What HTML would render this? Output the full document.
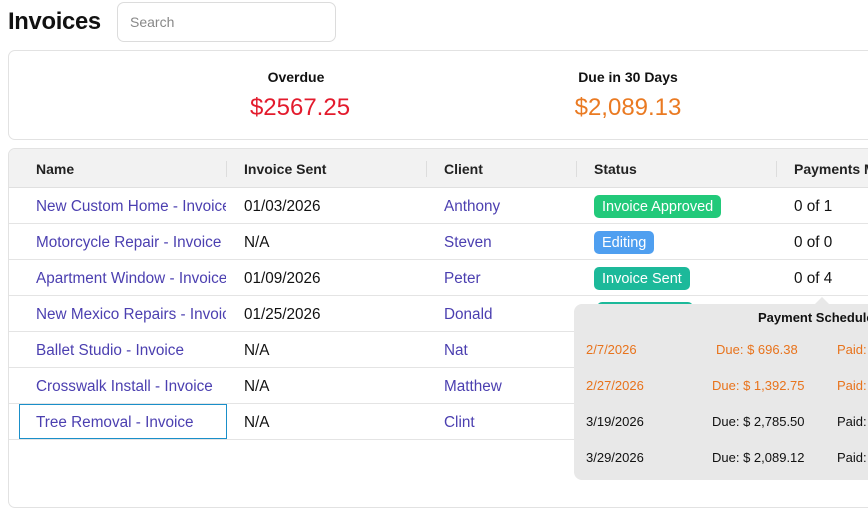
<!DOCTYPE html>
<html><head><meta charset="utf-8"><style>
*{box-sizing:border-box;margin:0;padding:0}
body{width:868px;height:488px;overflow:hidden;background:#fff;font-family:"Liberation Sans",Arial,sans-serif;color:#111;position:relative}
.a{position:absolute;white-space:nowrap}
h1{position:absolute;left:8px;top:8px;font-size:23.8px;font-weight:700;letter-spacing:-0.3px}
.search{left:117px;top:2px;width:219px;height:40px;border:1px solid #dcdcdc;border-radius:7px;color:#888;font-size:14px;padding:11px 0 0 12px}
.card{left:8px;top:50px;width:880px;height:90px;border:1px solid #e2e2e2;border-radius:7px}
.lbl{font-size:14px;font-weight:700;transform:translateX(-50%)}
.val{font-size:24px;transform:translateX(-50%)}
.tbl{left:8px;top:148px;width:880px;height:360px;border:1px solid #e2e2e2;border-radius:7px;overflow:hidden}
.hdr{position:absolute;left:0;top:0;width:100%;height:39px;background:#f2f2f2;border-bottom:1px solid #e0e0e0}
.sep{position:absolute;top:12px;width:1px;height:16px;background:#ddd}
.row{position:absolute;left:0;width:100%;height:36px;border-bottom:1px solid #e4e4e4}
.t{font-size:15.3px}
.h{font-size:14px;font-weight:700;color:#222;top:161px}
.lnk{color:#4b3fb0;width:190px;overflow:hidden}
.badge{font-size:14.5px;color:#fff;border-radius:5px;padding:4px 8px 0;height:23px}
.tip{left:574px;top:304px;width:320px;height:176px;background:#e8e8e8;border-radius:8px}
.ar{left:815px;top:297px;width:0;height:0;border-left:7px solid transparent;border-right:7px solid transparent;border-bottom:7px solid #e8e8e8}
.s{font-size:13px}
.o{color:#e8731c}
</style></head><body>
<h1>Invoices</h1>
<div class="a search">Search</div>
<div class="a card"></div>
<div class="a lbl" style="left:296px;top:69px">Overdue</div>
<div class="a val" style="left:300px;top:94px;color:#e31b2d">$2567.25</div>
<div class="a lbl" style="left:628px;top:69px">Due in 30 Days</div>
<div class="a val" style="left:628px;top:94px;color:#ea7a22">$2,089.13</div>
<div class="a tbl">
<div class="hdr"><div class="sep" style="left:217px"></div><div class="sep" style="left:417px"></div><div class="sep" style="left:567px"></div><div class="sep" style="left:767px"></div></div>
<div class="row" style="top:39px"></div><div class="row" style="top:75px"></div><div class="row" style="top:111px"></div><div class="row" style="top:147px"></div><div class="row" style="top:183px"></div><div class="row" style="top:219px"></div><div class="row" style="top:255px"></div>
</div>
<div class="a h" style="left:36px">Name</div>
<div class="a h" style="left:244px">Invoice Sent</div>
<div class="a h" style="left:444px">Client</div>
<div class="a h" style="left:594px">Status</div>
<div class="a h" style="left:794px">Payments M</div>

<div class="a t lnk" style="left:36px;top:198px">New Custom Home - Invoice</div>
<div class="a t lnk" style="left:36px;top:234px">Motorcycle Repair - Invoice</div>
<div class="a t lnk" style="left:36px;top:270px">Apartment Window - Invoice</div>
<div class="a t lnk" style="left:36px;top:306px">New Mexico Repairs - Invoice</div>
<div class="a t lnk" style="left:36px;top:342px">Ballet Studio - Invoice</div>
<div class="a t lnk" style="left:36px;top:378px">Crosswalk Install - Invoice</div>
<div class="a" style="left:19px;top:404px;width:208px;height:35px;border:1px solid #1a8fc9"></div>
<div class="a t lnk" style="left:36px;top:414px">Tree Removal - Invoice</div>

<div class="a t" style="left:244px;top:198px">01/03/2026</div>
<div class="a t" style="left:244px;top:234px">N/A</div>
<div class="a t" style="left:244px;top:270px">01/09/2026</div>
<div class="a t" style="left:244px;top:306px">01/25/2026</div>
<div class="a t" style="left:244px;top:342px">N/A</div>
<div class="a t" style="left:244px;top:378px">N/A</div>
<div class="a t" style="left:244px;top:414px">N/A</div>

<div class="a t" style="left:444px;top:198px;color:#4b3fb0">Anthony</div>
<div class="a t" style="left:444px;top:234px;color:#4b3fb0">Steven</div>
<div class="a t" style="left:444px;top:270px;color:#4b3fb0">Peter</div>
<div class="a t" style="left:444px;top:306px;color:#4b3fb0">Donald</div>
<div class="a t" style="left:444px;top:342px;color:#4b3fb0">Nat</div>
<div class="a t" style="left:444px;top:378px;color:#4b3fb0">Matthew</div>
<div class="a t" style="left:444px;top:414px;color:#4b3fb0">Clint</div>

<div class="a badge" style="left:594px;top:195px;background:#22c97a">Invoice Approved</div>
<div class="a badge" style="left:594px;top:231px;background:#4f9ff0">Editing</div>
<div class="a badge" style="left:594px;top:267px;background:#1cb99a">Invoice Sent</div>
<div class="a badge" style="left:597px;top:302px;background:#1cb99a">Invoice Sent</div>

<div class="a t" style="left:794px;top:198px">0 of 1</div>
<div class="a t" style="left:794px;top:234px">0 of 0</div>
<div class="a t" style="left:794px;top:270px">0 of 4</div>

<div class="a ar"></div>
<div class="a tip"></div>
<div class="a s" style="left:758px;top:310px;font-weight:700">Payment Schedule</div>
<div class="a s o" style="left:586px;top:342px">2/7/2026</div>
<div class="a s o" style="left:716px;top:342px">Due: $ 696.38</div>
<div class="a s o" style="left:837px;top:342px">Paid:</div>
<div class="a s o" style="left:586px;top:378px">2/27/2026</div>
<div class="a s o" style="left:712px;top:378px">Due: $ 1,392.75</div>
<div class="a s o" style="left:837px;top:378px">Paid:</div>
<div class="a s" style="left:586px;top:414px">3/19/2026</div>
<div class="a s" style="left:712px;top:414px">Due: $ 2,785.50</div>
<div class="a s" style="left:837px;top:414px">Paid:</div>
<div class="a s" style="left:586px;top:450px">3/29/2026</div>
<div class="a s" style="left:712px;top:450px">Due: $ 2,089.12</div>
<div class="a s" style="left:837px;top:450px">Paid:</div>
</body></html>
